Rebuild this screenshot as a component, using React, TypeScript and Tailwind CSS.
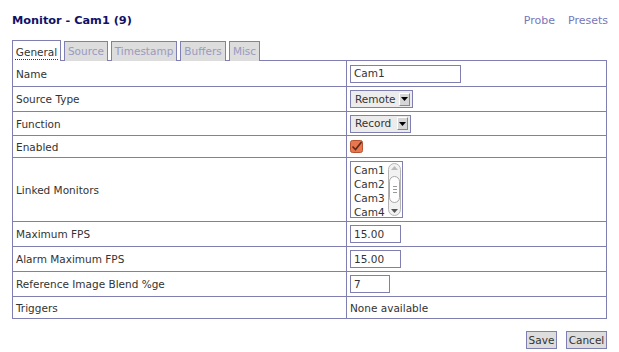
import { Fragment, ReactNode } from 'react'

const tabs = [
  { name: 'General', w: 'w-[49px]', active: true },
  { name: 'Source', w: 'w-[44px]', active: false },
  { name: 'Timestamp', w: 'w-[66px]', active: false },
  { name: 'Buffers', w: 'w-[46px]', active: false },
  { name: 'Misc', w: 'w-[31px]', active: false },
]

function SelectBox({ value, w }: { value: string; w: string }) {
  return (
    <div className={`${w} h-[18px] border border-[#7f7fb2] bg-[#ececec] flex items-center justify-between pl-[4px] pr-[2px]`}>
      <span className="mt-px">{value}</span>
      <span className="w-[11px] h-[13px] bg-[#d6d6d6] border-t border-l border-t-white border-l-white border-r border-b border-r-[#888] border-b-[#888] flex items-center justify-center">
        <svg width="7" height="4" viewBox="0 0 7 4">
          <path d="M0 0 H7 L3.5 4 Z" fill="#000" />
        </svg>
      </span>
    </div>
  )
}

function TextInput({ value, w }: { value: string; w: string }) {
  return (
    <div className={`${w} h-[18px] border border-[#7f7fb2] bg-white flex items-center pl-[3px]`}>
      <span className="mt-px">{value}</span>
    </div>
  )
}

function CheckBox() {
  return (
    <svg width="13" height="13" viewBox="0 0 13 13">
      <rect x="0.5" y="0.5" width="12" height="12" rx="2" fill="#e8764f" stroke="#b8532f" />
      <path d="M2.5 6.5 L5.5 9.5 L11.5 2" fill="none" stroke="#5a2a1a" strokeWidth="1.6" />
    </svg>
  )
}

function ListBox() {
  return (
    <div className="w-[53px] h-[57px] border border-[#7f7fb2] bg-white flex">
      <div className="flex-1 pl-[3px] pt-[1px] leading-[14px]">
        <div>Cam1</div>
        <div>Cam2</div>
        <div>Cam3</div>
        <div>Cam4</div>
      </div>
      <div className="w-[13px] my-[1px] mr-[1px] rounded-full border border-[#b4b4b4] bg-[#f2f2f2] flex flex-col items-center justify-between py-[2px]">
        <svg width="7" height="4" viewBox="0 0 7 4">
          <path d="M0 4 H7 L3.5 0 Z" fill="#bbb" />
        </svg>
        <div className="w-[11px] h-[27px] rounded-full border border-[#a8a8a8] bg-white flex flex-col items-center justify-center gap-[2px]">
          <div className="w-[4px] h-px bg-[#999]" />
          <div className="w-[4px] h-px bg-[#999]" />
          <div className="w-[4px] h-px bg-[#999]" />
        </div>
        <svg width="7" height="4" viewBox="0 0 7 4">
          <path d="M0 0 H7 L3.5 4 Z" fill="#555" />
        </svg>
      </div>
    </div>
  )
}

const rows: { label: string; h: string; content: ReactNode }[] = [
  { label: 'Name', h: 'h-[26px]', content: <TextInput value="Cam1" w="w-[111px]" /> },
  { label: 'Source Type', h: 'h-[25px]', content: <SelectBox value="Remote" w="w-[63px]" /> },
  { label: 'Function', h: 'h-[24px]', content: <SelectBox value="Record" w="w-[61px]" /> },
  { label: 'Enabled', h: 'h-[22px]', content: <CheckBox /> },
  { label: 'Linked Monitors', h: 'h-[64px]', content: <ListBox /> },
  { label: 'Maximum FPS', h: 'h-[25px]', content: <TextInput value="15.00" w="w-[51px]" /> },
  { label: 'Alarm Maximum FPS', h: 'h-[25px]', content: <TextInput value="15.00" w="w-[51px]" /> },
  { label: 'Reference Image Blend %ge', h: 'h-[25px]', content: <TextInput value="7" w="w-[40px]" /> },
  { label: 'Triggers', h: 'h-[21px]', content: <span className="mt-[2px]">None available</span> },
]

export default function App() {
  return (
    <div className="min-h-[352px] bg-white font-['DejaVu_Sans',sans-serif] text-[10.5px] text-[#333333] px-[12px]">
      {/* Header */}
      <div className="h-[40px] flex items-start justify-between pt-[13px] w-[595px]">
        <h2 className="font-bold text-[11.3px] text-[#111166] leading-[16px]">Monitor - Cam1 (9)</h2>
        <div className="flex gap-[13px] text-[#7777bb] leading-[16px] mr-[-1px] text-[11px]">
          <a>Probe</a>
          <a>Presets</a>
        </div>
      </div>

      {/* Tabs */}
      <div className="flex gap-[3px] h-[21px]">
        {tabs.map((t) => (
          <div
            key={t.name}
            className={`${t.w} border border-b-0 border-[#7f7fb2] flex items-center justify-center ${
              t.active ? 'h-[21px] bg-white text-[#333333]' : 'bg-[#dddddd] text-[#9a9abf] h-[20px] mt-px'
            }`}
          >
            <span className={t.active ? 'border-b border-dotted border-[#333] leading-[14px] mt-[3px] px-[1px]' : 'mt-[1px]'}>{t.name}</span>
          </div>
        ))}
      </div>

      {/* Form table */}
      <div className="w-[595px] border border-[#7f7fb2] -mt-px">
        {rows.map((r, i) => (
          <Fragment key={r.label}>
            <div className={`flex ${r.h} ${i < rows.length - 1 ? 'border-b border-[#7f7fb2]' : ''}`}>
              <div className="w-[334px] border-r border-[#7f7fb2] flex items-center pl-[3px] pt-[2px]">{r.label}</div>
              <div className="flex-1 flex items-center pl-[3px]">{r.content}</div>
            </div>
          </Fragment>
        ))}
      </div>

      {/* Buttons */}
      <div className="w-[595px] flex justify-end gap-[9px] mt-[12px]">
        <button className="w-[31px] h-[18px] border border-[#7f7fb2] bg-[#dddddd] text-[#333333] leading-[16px]">Save</button>
        <button className="w-[41px] h-[18px] border border-[#7f7fb2] bg-[#dddddd] text-[#333333] leading-[16px]">Cancel</button>
      </div>
    </div>
  )
}
